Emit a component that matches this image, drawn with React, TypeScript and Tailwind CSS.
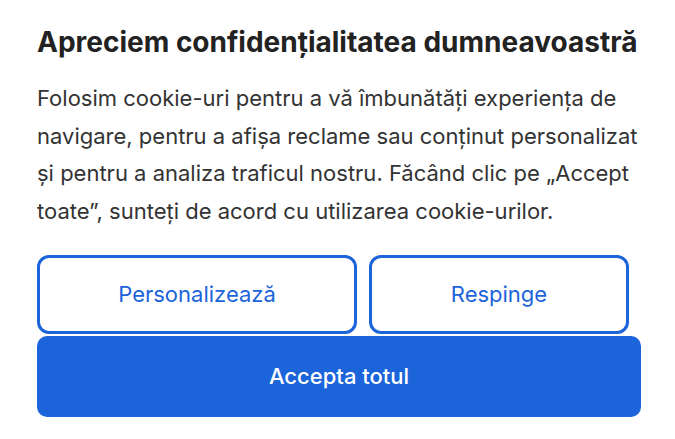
import React from "react";

const CookieBanner: React.FC = () => {
  return (
    <div className="min-h-screen bg-white pl-[37px] pr-[34px] pt-[24px] font-['Inter','Liberation_Sans',sans-serif]">
      <h1 className="text-[28px] font-bold leading-[36px] text-[#222222]">
        Apreciem confidențialitatea dumneavoastră
      </h1>
      <p className="mt-[20px] text-[22px] leading-[37.5px] text-[#333333]">
        Folosim cookie-uri pentru a vă îmbunătăți experiența de navigare, pentru a afișa reclame sau conținut personalizat și pentru a analiza traficul nostru. Făcând clic pe „Accept toate”, sunteți de acord cu utilizarea cookie-urilor.
      </p>

      <div className="mt-[25px] flex gap-[12px]">
        <button className="h-[79px] w-[320px] rounded-[12px] border-[3px] border-[#1b64da] bg-white text-[22px] text-[#1b64da]">
          Personalizează
        </button>
        <button className="h-[79px] w-[260px] rounded-[12px] border-[3px] border-[#1b64da] bg-white text-[22px] text-[#1b64da]">
          Respinge
        </button>
      </div>
      <button className="mt-[2px] h-[81px] w-full rounded-[10px] bg-[#1b64da] text-[22px] font-medium text-white">
        Accepta totul
      </button>
    </div>
  );
};

export default CookieBanner;
